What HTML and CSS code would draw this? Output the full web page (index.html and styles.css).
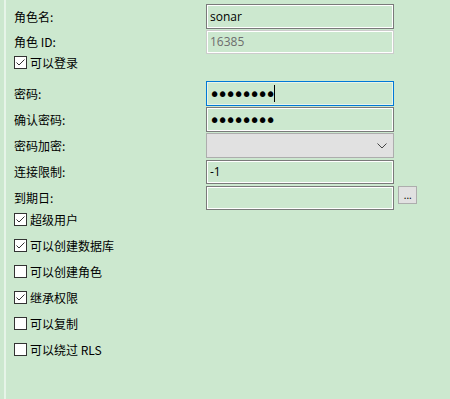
FILE: index.html
```html
<!DOCTYPE html>
<html lang="zh">
<head>
<meta charset="utf-8">
<link rel="stylesheet" href="styles.css">
</head>
<body>
<div class="panel">
  <div class="row first">
    <span class="label">角色名:</span>
    <div class="field">sonar</div>
  </div>
  <div class="row id-row">
    <span class="label">角色 ID:</span>
    <div class="field disabled">16385</div>
  </div>
  <div class="check login">
    <span class="box"><svg width="11" height="11" viewBox="0 0 11 11"><polyline points="1.5,5.5 4,8 9.5,2.5" fill="none" stroke="#333" stroke-width="1"/></svg></span>
    <span class="ctext">可以登录</span>
  </div>
  <div class="row pw-row">
    <span class="label">密码:</span>
    <div class="field focus"><span class="dots">••••••••</span><span class="caret"></span></div>
  </div>
  <div class="row">
    <span class="label">确认密码:</span>
    <div class="field"><span class="dots">••••••••</span></div>
  </div>
  <div class="row">
    <span class="label">密码加密:</span>
    <div class="field select"><svg class="chev" width="10" height="6" viewBox="0 0 10 6"><polyline points="0.5,0.5 5,5 9.5,0.5" fill="none" stroke="#444" stroke-width="1"/></svg></div>
  </div>
  <div class="row limit-row">
    <span class="label">连接限制:</span>
    <div class="field">-1</div>
  </div>
  <div class="row date-row">
    <span class="label">到期日:</span>
    <div class="field date"></div>
    <div class="more">...</div>
  </div>
  <div class="check c-first">
    <span class="box"><svg width="11" height="11" viewBox="0 0 11 11"><polyline points="1.5,5.5 4,8 9.5,2.5" fill="none" stroke="#333" stroke-width="1"/></svg></span>
    <span class="ctext">超级用户</span>
  </div>
  <div class="check">
    <span class="box"><svg width="11" height="11" viewBox="0 0 11 11"><polyline points="1.5,5.5 4,8 9.5,2.5" fill="none" stroke="#333" stroke-width="1"/></svg></span>
    <span class="ctext">可以创建数据库</span>
  </div>
  <div class="check">
    <span class="box"></span>
    <span class="ctext">可以创建角色</span>
  </div>
  <div class="check">
    <span class="box"><svg width="11" height="11" viewBox="0 0 11 11"><polyline points="1.5,5.5 4,8 9.5,2.5" fill="none" stroke="#333" stroke-width="1"/></svg></span>
    <span class="ctext">继承权限</span>
  </div>
  <div class="check">
    <span class="box"></span>
    <span class="ctext">可以复制</span>
  </div>
  <div class="check">
    <span class="box"></span>
    <span class="ctext">可以绕过 RLS</span>
  </div>
</div>
</body>
</html>
```

FILE: styles.css
```css
html, body {
  margin: 0;
  padding: 0;
  background: #cce8cf;
  height: 100%;
  overflow: hidden;
}
body {
  font-family: "Noto Sans CJK SC", "Noto Sans", sans-serif;
  font-size: 12px;
  color: #000;
}
.panel {
  margin-left: 4px;
  border-left: 2px solid #e6f4e8;
  padding-left: 8px;
  height: 100%;
  box-sizing: border-box;
  display: flex;
  flex-direction: column;
}
.row {
  display: flex;
  align-items: center;
  margin-top: 1px;
  height: 25px;
}
.row.first { margin-top: 4px; }
.row.id-row { margin-top: 1px; height: 24px; }
.row.pw-row { margin-top: 12px; }
.row.limit-row { margin-top: 2px; height: 24px; }
.row.date-row { margin-top: 2px; height: 24px; }
.label {
  width: 192px;
  flex: none;
  line-height: 16px;
}
.field {
  width: 188px;
  height: 100%;
  box-sizing: border-box;
  border: 1px solid #7a7a7a;
  box-shadow: inset 0 0 0 1px #ffffff;
  padding-left: 3px;
  display: flex;
  align-items: center;
  font-family: "Open Sans", "Noto Sans", sans-serif;
  font-size: 12px;
  line-height: 16px;
}
.field.disabled {
  border-color: #cccccc;
  color: #6d6d6d;
}
.field.focus {
  border-color: #0078d7;
  box-shadow: inset 0 0 0 1px #e8f4ea;
}
.field.select {
  background: #e1e1e1;
  border-color: #adadad;
  box-shadow: none;
  justify-content: flex-end;
  padding-right: 6px;
}
.chev { display: block; }
.dots {
  font-family: "DejaVu Sans", sans-serif;
  font-size: 19px;
  letter-spacing: -3.2px;
  line-height: 14px;
  margin-left: -1px;
}
.caret {
  display: inline-block;
  width: 1px;
  height: 17px;
  background: #000;
  margin-left: 1px;
}
.more {
  margin-left: 4px;
  align-self: flex-start;
  width: 19px;
  height: 18px;
  box-sizing: border-box;
  background: #e1e1e1;
  border: 1px solid #adadad;
  font-family: "DejaVu Sans", sans-serif;
  font-size: 10px;
  line-height: 17px;
  text-align: center;
  letter-spacing: -0.5px;
}
.check {
  display: flex;
  align-items: center;
  height: 13px;
  margin-top: 13px;
}
.check.login { margin-top: 2px; }
.check.c-first { margin-top: 3px; }
.box {
  width: 13px;
  height: 13px;
  box-sizing: border-box;
  border: 1px solid #333333;
  background: #ffffff;
  flex: none;
  display: flex;
  align-items: center;
  justify-content: center;
}
.box svg { display: block; }
.ctext {
  margin-left: 3px;
  line-height: 16px;
  white-space: nowrap;
}
```
